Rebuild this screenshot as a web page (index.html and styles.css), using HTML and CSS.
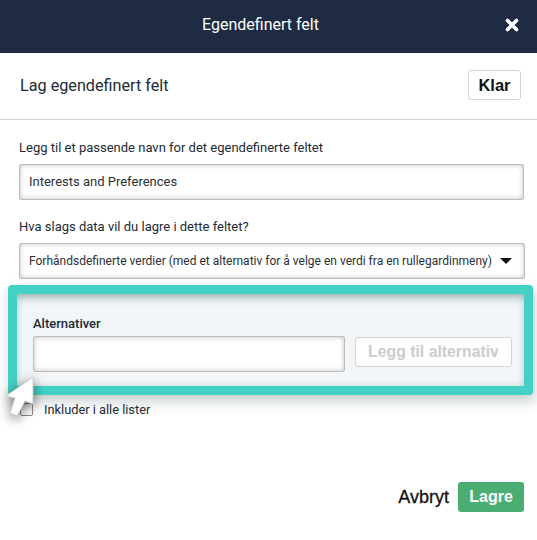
FILE: index.html
```html
<!DOCTYPE html>
<html lang="no">
<head>
    <meta charset="UTF-8">
    <title>Egendefinert felt</title>
    <link rel="stylesheet" href="styles.css">
</head>
<body>
    <header class="topbar">
        <span class="topbar-title">Egendefinert felt</span>
        <svg class="topbar-close" width="14" height="14" viewBox="0 0 14 14">
            <path d="M2.5 2.5 L11.5 11.5 M11.5 2.5 L2.5 11.5" stroke="#ffffff" stroke-width="3.6" stroke-linecap="round"/>
        </svg>
    </header>

    <div class="subbar">
        <h2 class="subbar-title">Lag egendefinert felt</h2>
        <button class="button-done" type="button">Klar</button>
    </div>

    <form class="form">
        <label class="label">Legg til et passende navn for det egendefinerte feltet</label>
        <div class="input input-name">Interests and Preferences</div>

        <label class="label">Hva slags data vil du lagre i dette feltet?</label>
        <div class="input input-select">
            <span>Forhåndsdefinerte verdier (med et alternativ for å velge en verdi fra en rullegardinmeny)</span>
            <span class="caret"></span>
        </div>

        <div class="highlight">
            <div class="options">
                <div class="options-col">
                    <label class="options-label">Alternativer</label>
                    <div class="input options-input"></div>
                </div>
                <button class="button-add" type="button" disabled>Legg til alternativ</button>
            </div>
        </div>

        <div class="check-row">
            <span class="checkbox"></span>
            <span class="check-label">Inkluder i alle lister</span>
        </div>
    </form>

    <footer class="actions">
        <span class="cancel">Avbryt</span>
        <button class="button-save" type="button">Lagre</button>
    </footer>

    <svg class="cursor" width="50" height="60" viewBox="0 0 50 60">
        <path d="M33 7 L33 34 L25 31 L17 46 L10 43 L15 28 L6 26 Z" fill="#ffffff" stroke="#c9cdcd" stroke-width="1" stroke-linejoin="round"/>
    </svg>
</body>
</html>
```

FILE: styles.css
```css
* {
    margin: 0;
    padding: 0;
    box-sizing: border-box;
}
body {
    font-family: Roboto, "Liberation Sans", sans-serif;
    background-color: #ffffff;
    color: #222b36;
    font-size: 13px;
    height: 540px;
    overflow: hidden;
    position: relative;
}

.topbar {
    height: 53px;
    padding: 0 16px 4px 0;
    background-color: #1e2b42;
    display: flex;
    align-items: center;
    justify-content: center;
    position: relative;
}
.topbar-title {
    color: #ffffff;
    font-size: 16px;
}
.topbar-close {
    position: absolute;
    right: 18px;
    top: 18px;
}

.subbar {
    height: 67px;
    padding: 17px 16px 0 20px;
    border-bottom: 1px solid #d0d0d0;
    display: flex;
    justify-content: space-between;
    align-items: flex-start;
}
.subbar-title {
    font-size: 16.2px;
    font-weight: 400;
    margin-top: 6px;
}
.button-done {
    width: 53px;
    height: 30px;
    background: #ffffff;
    border: 1px solid #cfd3d6;
    border-radius: 3px;
    font-family: "Liberation Sans", sans-serif;
    font-weight: bold;
    font-size: 16.5px;
    color: #111111;
}

.form {
    padding: 20px 13px 0 19px;
}
.label {
    display: block;
    font-size: 13px;
    line-height: 16px;
    margin-bottom: 8px;
}
.input {
    background: #ffffff;
    border: 1px solid #bdbdbd;
    border-radius: 2px;
    box-shadow: inset 0 0 5px rgba(0, 0, 0, 0.25);
    font-size: 13px;
    color: #2a2f36;
}
.input-name {
    height: 36px;
    line-height: 34px;
    padding-left: 9px;
    margin-bottom: 19px;
}
.input-select {
    height: 36px;
    margin-right: -1px;
    padding: 0 12px 0 9px;
    display: flex;
    align-items: center;
    justify-content: space-between;
    font-size: 12px;
    white-space: nowrap;
}
.caret {
    width: 0;
    height: 0;
    border-left: 6px solid transparent;
    border-right: 6px solid transparent;
    border-top: 6px solid #111111;
}

.highlight {
    margin: 6px -9px 0 -11px;
    border: 9px solid #44d1c5;
    border-radius: 4px;
    height: 110px;
    background-color: #f2f6f8;
    box-shadow: 2px 6px 14px rgba(60, 90, 90, 0.3), inset 0 0 7px rgba(90, 130, 125, 0.3), inset 0 9px 9px -5px rgba(90, 130, 125, 0.45);
}
.options {
    display: flex;
    align-items: flex-end;
    justify-content: space-between;
    padding: 23px 12px 0 16px;
}
.options-label {
    display: block;
    font-size: 13px;
    font-weight: 500;
    line-height: 14px;
    margin-bottom: 5px;
}
.options-input {
    width: 312px;
    height: 36px;
}
.button-add {
    width: 157px;
    height: 30px;
    margin-bottom: 5px;
    background: #ffffff;
    border: 1px solid #cfd3d6;
    border-radius: 3px;
    font-family: "Liberation Sans", sans-serif;
    font-weight: bold;
    font-size: 15.8px;
    color: #cccccc;
}

.check-row {
    display: flex;
    align-items: center;
    gap: 11px;
    margin: 7px 0 0 1px;
}
.checkbox {
    width: 13px;
    height: 13px;
    border: 1px solid #888888;
    border-radius: 2px;
}
.check-label {
    font-size: 12.8px;
}

.actions {
    display: flex;
    align-items: center;
    justify-content: flex-end;
    gap: 9px;
    padding-right: 13px;
    margin-top: 65px;
}
.cancel {
    font-family: "Liberation Sans", sans-serif;
    font-size: 18px;
    -webkit-text-stroke: 0.3px #111111;
    color: #111111;
}
.button-save {
    width: 66px;
    height: 30px;
    background-color: #4aad72;
    border: none;
    border-radius: 3px;
    font-family: "Liberation Sans", sans-serif;
    font-weight: bold;
    font-size: 16px;
    color: #ffffff;
}

.cursor {
    position: absolute;
    left: 0;
    top: 370px;
    filter: drop-shadow(0 3px 6px rgba(0, 0, 0, 0.55));
}
```
